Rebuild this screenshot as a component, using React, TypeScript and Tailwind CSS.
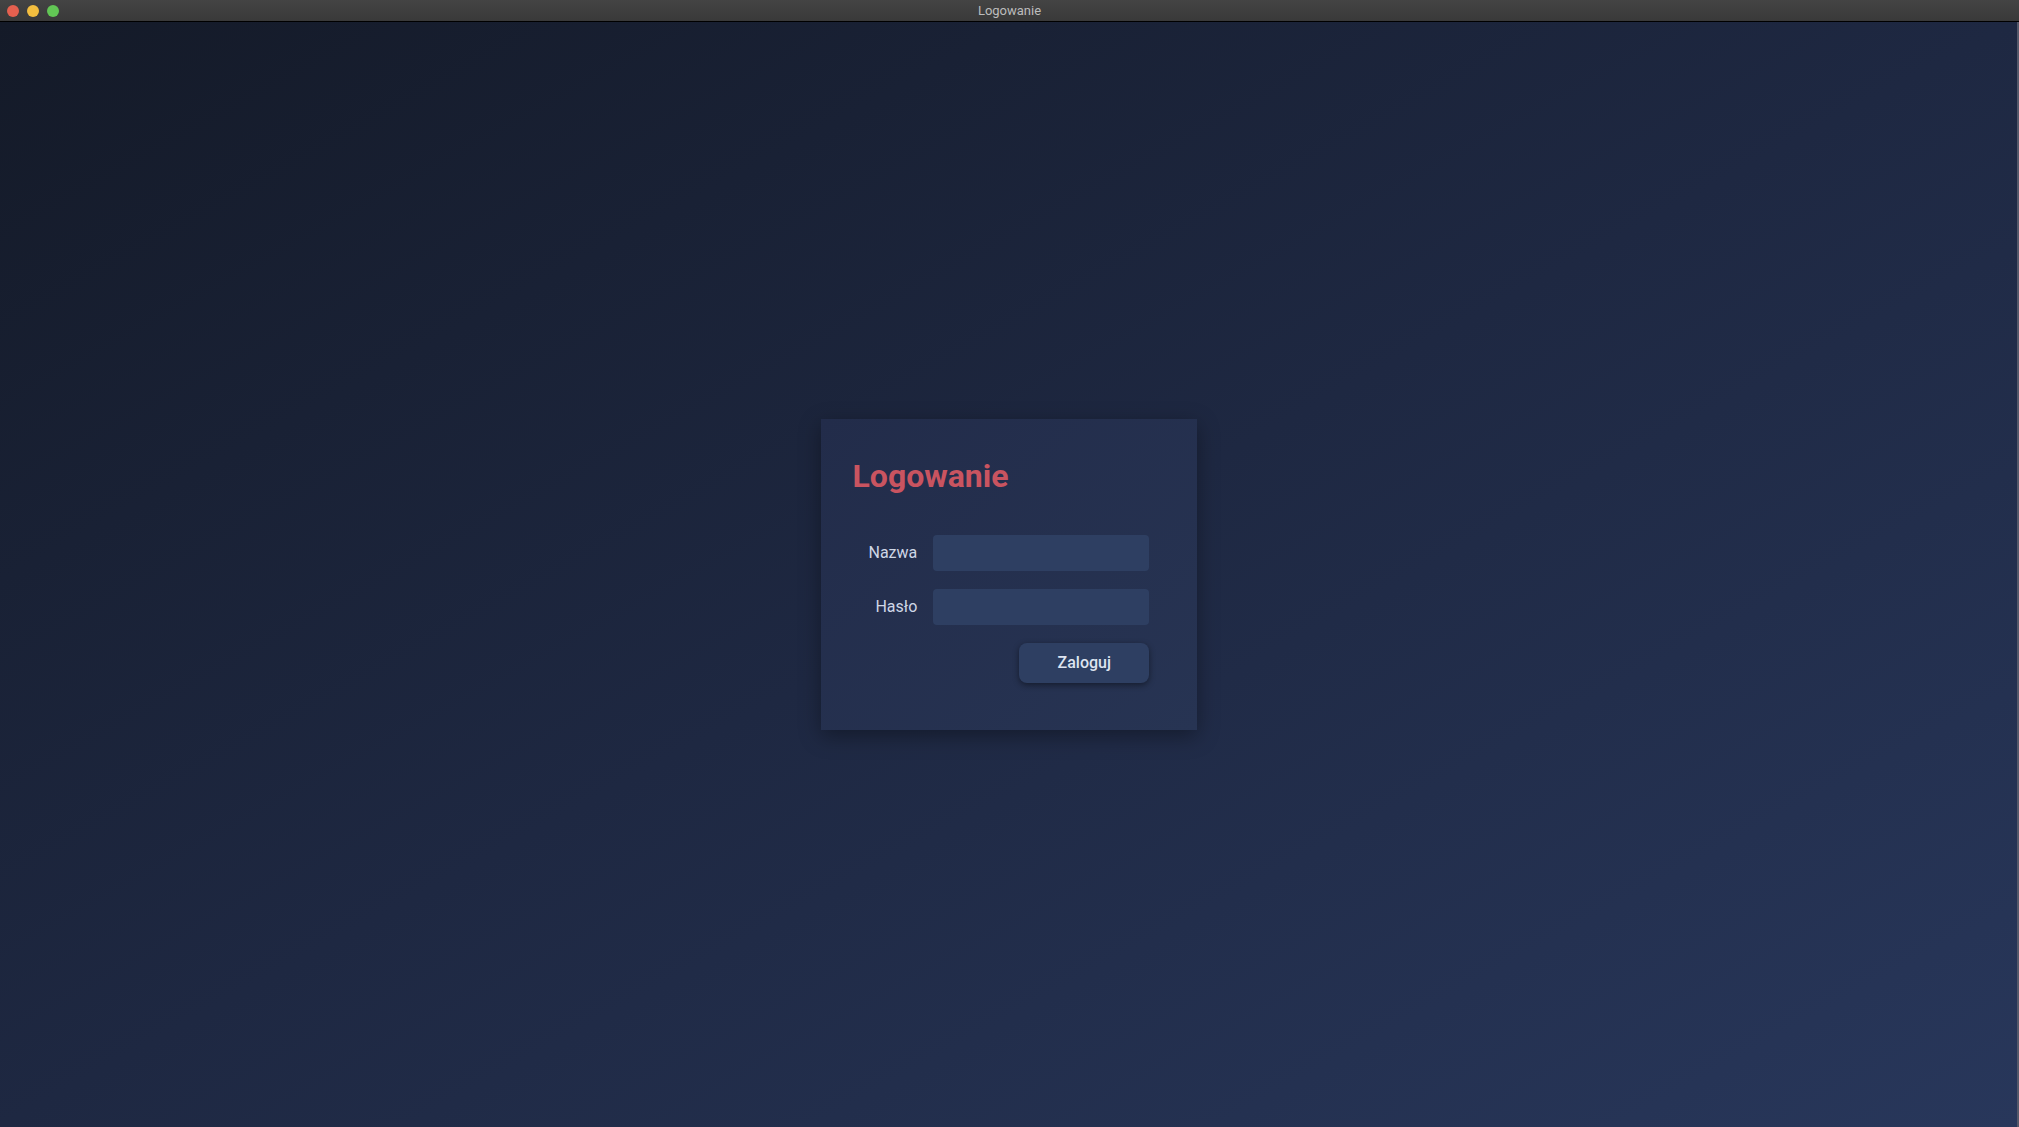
import { useState } from 'react'

function TitleBar() {
  return (
    <div className="relative flex h-[22px] shrink-0 items-center justify-center border-b border-black bg-gradient-to-b from-[#444444] to-[#393939]">
      <div className="absolute left-[7px] top-[5px] flex gap-[8px]">
        <span className="h-[12px] w-[12px] rounded-full bg-[#e5604f]" />
        <span className="h-[12px] w-[12px] rounded-full bg-[#f3be3f]" />
        <span className="h-[12px] w-[12px] rounded-full bg-[#62c655]" />
      </div>
      <span className="text-[13px] text-[#bcbcbc]">Logowanie</span>
    </div>
  )
}

export default function App() {
  const [name, setName] = useState('')
  const [password, setPassword] = useState('')

  return (
    <div
      className="flex h-[1127px] w-full flex-col overflow-hidden"
      style={{ fontFamily: 'Roboto, "Liberation Sans", sans-serif' }}
    >
      <TitleBar />
      <div className="flex flex-1 items-center justify-center border-r-2 border-[#55596a] bg-gradient-to-br from-[#141a28] via-[#1e2842] to-[#28375b]">
        <div className="w-[376px] bg-gradient-to-br from-[#222c4a] to-[#273453] px-8 pb-[47px] pt-[38px] shadow-[0_6px_20px_rgba(0,0,0,0.35)]">
          <h1 className="text-[32px] font-bold leading-[38px] text-[#c95460]">Logowanie</h1>
          <form
            className="mt-[40px] grid grid-cols-[auto_216px] items-center gap-x-4 gap-y-[18px] px-4"
            onSubmit={(e) => e.preventDefault()}
          >
            <label className="text-right text-[16px] text-[#cfd7e6]">Nazwa</label>
            <input
              type="text"
              value={name}
              onChange={(e) => setName(e.target.value)}
              className="h-[36px] rounded-[4px] bg-[#2e3f62] px-3 text-[16px] text-[#dde4f0] outline-none"
            />
            <label className="text-right text-[16px] text-[#cfd7e6]">Hasło</label>
            <input
              type="password"
              value={password}
              onChange={(e) => setPassword(e.target.value)}
              className="h-[36px] rounded-[4px] bg-[#2e3f62] px-3 text-[16px] text-[#dde4f0] outline-none"
            />
            <div />
            <div className="flex justify-end">
              <button
                type="submit"
                className="h-[40px] w-[130px] rounded-[8px] bg-[#2e3f62] text-[16px] font-medium text-[#dde4f0] shadow-[0_2px_6px_rgba(0,0,0,0.45)]"
              >
                Zaloguj
              </button>
            </div>
          </form>
        </div>
      </div>
    </div>
  )
}
